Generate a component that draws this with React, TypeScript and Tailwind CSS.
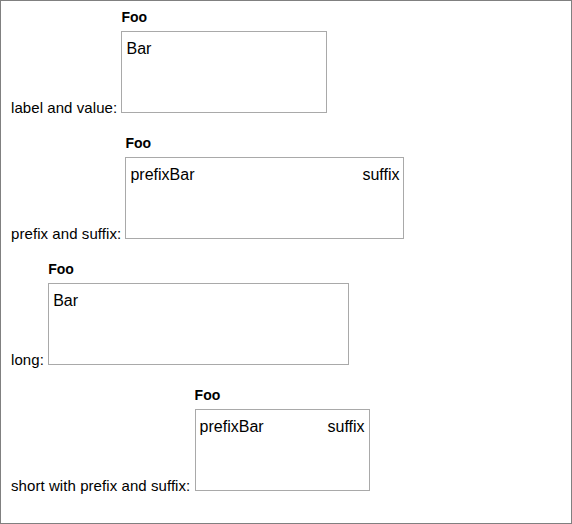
const rows = [
  { label: 'label and value:', width: 'w-[206px]', prefix: '', suffix: '' },
  { label: 'prefix and suffix:', width: 'w-[279px]', prefix: 'prefix', suffix: 'suffix' },
  { label: 'long:', width: 'w-[301px]', prefix: '', suffix: '' },
  { label: 'short with prefix and suffix:', width: 'w-[175px]', prefix: 'prefix', suffix: 'suffix' },
]

function Field({ width, prefix, suffix }: { width: string; prefix: string; suffix: string }) {
  return (
    <div className="inline-block overflow-hidden align-baseline tracking-normal">
      <div className="mb-[6px] text-[14px] leading-[16px] font-bold">Foo</div>
      <div className={`${width} h-[82px] border border-[#a9a9a9] pl-[4px] pr-[4px] pt-[8px]`}>
        <div className="flex justify-between text-[16px] leading-[18px]">
          <span>{prefix}Bar</span>
          {suffix && <span>{suffix}</span>}
        </div>
      </div>
    </div>
  )
}

export default function App() {
  return (
    <div
      className="w-[572px] h-[524px] border border-[#808080] pl-[10px] text-black"
      style={{ fontFamily: '"Liberation Sans", Arial, sans-serif' }}
    >
      {rows.map((row) => (
        <div key={row.label} className="h-[126px] pt-[8px] text-[15px] tracking-[0.07px]">
          {row.label} <Field width={row.width} prefix={row.prefix} suffix={row.suffix} />
        </div>
      ))}
    </div>
  )
}
